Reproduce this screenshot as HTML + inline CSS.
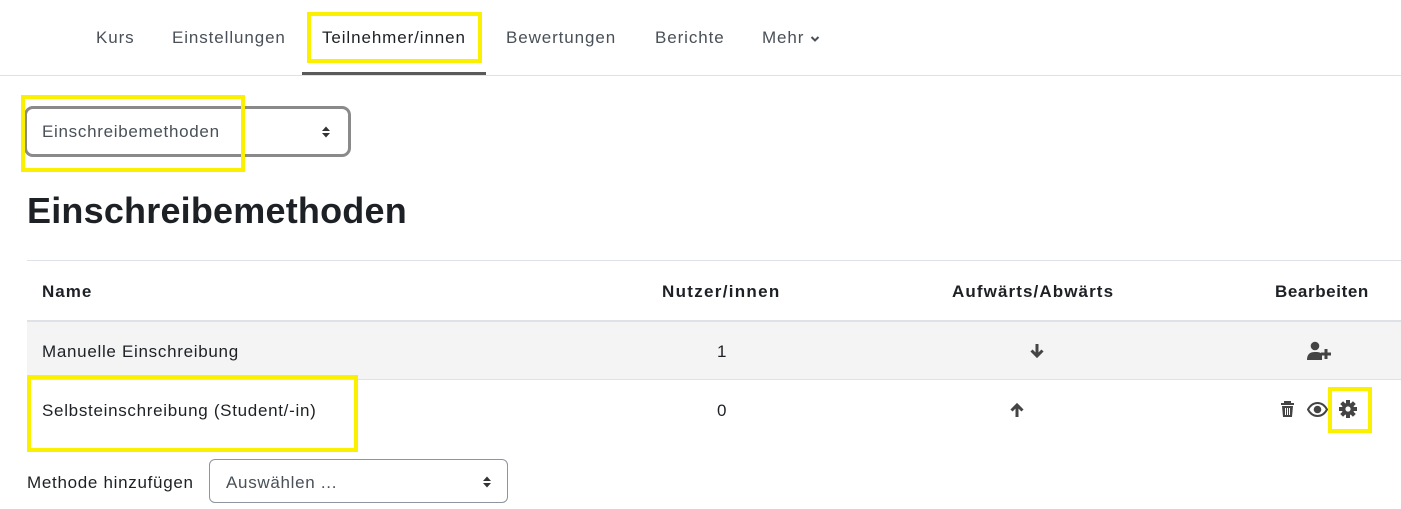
<!DOCTYPE html>
<html><head><meta charset="utf-8"><style>
body{margin:0;width:1401px;height:509px;background:#fff;position:relative;overflow:hidden;font-family:"Liberation Sans",sans-serif;color:#1d2125}
.a{position:absolute;white-space:nowrap}
.nav{font-size:17px;letter-spacing:.9px;color:#495057;top:28px}
.y{position:absolute;border:4px solid #fbf000;box-sizing:border-box}
.th{font-size:17px;letter-spacing:1px;font-weight:bold;top:282px}
.td{font-size:17px;letter-spacing:.7px}
</style></head><body>
<div class="a nav" style="left:96px">Kurs</div>
<div class="a nav" style="left:172px">Einstellungen</div>
<div class="a nav" style="left:322px;color:#1d2125">Teilnehmer/innen</div>
<div class="a nav" style="left:506px">Bewertungen</div>
<div class="a nav" style="left:655px">Berichte</div>
<div class="a nav" style="left:762px">Mehr <svg width="10" height="8" viewBox="0 0 10 8"><path d="M1.5 2l3.5 3.5L8.5 2" stroke="#495057" stroke-width="2" fill="none"/></svg></div>
<div class="a" style="left:0;top:75px;width:1401px;height:1px;background:#dee2e6"></div>
<div class="a" style="left:302px;top:72px;width:184px;height:3px;background:#5a5a5a"></div>
<div class="y" style="left:307px;top:12px;width:175px;height:51px"></div>

<div class="a" style="left:24px;top:106px;width:327px;height:51px;border:3px solid #8a8a8a;border-radius:9px;box-sizing:border-box"></div>
<div class="a" style="left:42px;top:122px;font-size:17px;letter-spacing:.7px;color:#495057">Einschreibemethoden</div>
<svg class="a" style="left:321px;top:125px" width="10" height="14" viewBox="0 0 10 14"><path d="M1 6L5 1.5 9 6ZM1 8L5 12.5 9 8Z" fill="#333"/></svg>
<div class="y" style="left:21px;top:95px;width:224px;height:77px"></div>

<div class="a" style="left:27px;top:190px;font-size:36px;letter-spacing:.2px;font-weight:bold">Einschreibemethoden</div>

<div class="a" style="left:27px;top:260px;width:1374px;height:1px;background:#dee2e6"></div>
<div class="a th" style="left:42px">Name</div>
<div class="a th" style="left:662px;letter-spacing:1.3px">Nutzer/innen</div>
<div class="a th" style="left:952px;letter-spacing:1.1px">Aufwärts/Abwärts</div>
<div class="a th" style="left:1275px;letter-spacing:.6px">Bearbeiten</div>
<div class="a" style="left:27px;top:320px;width:1374px;height:60px;background:#f4f4f4;border-top:2px solid #dee2e6;border-bottom:1px solid #dee2e6;box-sizing:border-box"></div>
<div class="a td" style="left:42px;top:342px">Manuelle Einschreibung</div>
<div class="a td" style="left:717px;top:342px">1</div>
<svg class="a" style="left:1029px;top:343px" width="16" height="16" viewBox="0 0 16 16"><path d="M8 1v11M2.5 7.5L8 13l5.5-5.5" stroke="#444" stroke-width="3" fill="none"/></svg>
<svg class="a" style="left:1307px;top:341px" width="24" height="20" viewBox="0 0 24 20"><circle cx="8" cy="5" r="4.3" fill="#444"/><path d="M0 19c0-6 3-8 8-8s6 1 7 2v6z" fill="#444"/><path d="M19 8v10M14 13h10" stroke="#444" stroke-width="3"/></svg>

<div class="a td" style="left:42px;top:401px">Selbsteinschreibung (Student/-in)</div>
<div class="a td" style="left:717px;top:401px">0</div>
<svg class="a" style="left:1009px;top:402px" width="16" height="16" viewBox="0 0 16 16"><path d="M8 15V4M2.5 8.5L8 3l5.5 5.5" stroke="#444" stroke-width="3" fill="none"/></svg>
<svg class="a" style="left:1280px;top:401px" width="15" height="17" viewBox="0 0 15 17"><path d="M1 3h13M5 2.5V1h5v1.5" stroke="#444" stroke-width="2" fill="none"/><path d="M2 5h11l-1 11H3z" fill="#444"/><path d="M5.5 7v7M7.5 7v7M9.5 7v7" stroke="#fff" stroke-width="1"/></svg>
<svg class="a" style="left:1307px;top:402px" width="21" height="15" viewBox="0 0 21 15"><path d="M1 7.5C4 2 8 1 10.5 1S17 2 20 7.5C17 13 13 14 10.5 14S4 13 1 7.5Z" fill="none" stroke="#444" stroke-width="2"/><circle cx="10.5" cy="7.5" r="3.8" fill="#444"/></svg>
<svg class="a" style="left:1339px;top:400px" width="18" height="18" viewBox="0 0 18 18"><g fill="#444" transform="translate(9 9)"><rect x="-2" y="-9" width="4" height="18"/><rect x="-2" y="-9" width="4" height="18" transform="rotate(45)"/><rect x="-2" y="-9" width="4" height="18" transform="rotate(90)"/><rect x="-2" y="-9" width="4" height="18" transform="rotate(135)"/><circle r="6.2"/></g><circle cx="9" cy="9" r="2.6" fill="#fff"/></svg>
<div class="y" style="left:27px;top:375px;width:331px;height:77px"></div>
<div class="y" style="left:1328px;top:387px;width:44px;height:46px"></div>

<div class="a td" style="left:27px;top:473px;color:#1d2125">Methode hinzufügen</div>
<div class="a" style="left:209px;top:459px;width:299px;height:44px;border:1px solid #8f959e;border-radius:6px;box-sizing:border-box"></div>
<div class="a td" style="left:226px;top:473px;color:#495057">Auswählen ...</div>
<svg class="a" style="left:482px;top:475px" width="10" height="14" viewBox="0 0 10 14"><path d="M1 6L5 1.5 9 6ZM1 8L5 12.5 9 8Z" fill="#333"/></svg>
</body></html>
